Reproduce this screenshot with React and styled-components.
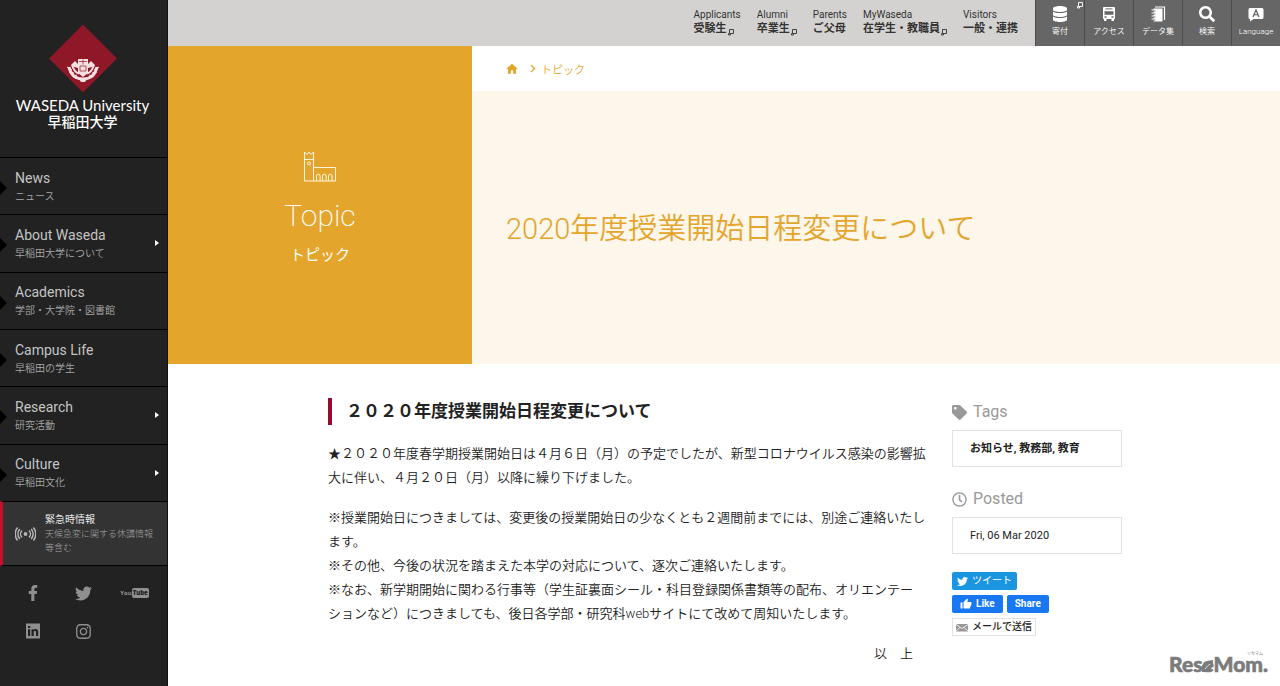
import React from "react";
import styled, { createGlobalStyle } from "styled-components";
import {
  FaDatabase,
  FaFacebookF,
  FaInstagram,
  FaRegClock,
  FaSearch,
  FaTag,
  FaTwitter,
} from "react-icons/fa";
import { MdHome, MdThumbUp } from "react-icons/md";

const GlobalStyle = createGlobalStyle`
  * {
    box-sizing: border-box;
  }

  body {
    margin: 0;
    background: #ffffff;
    color: #222222;
    font-family: Roboto, "Noto Sans CJK JP", sans-serif;
    font-size: 13px;
  }

  a {
    color: inherit;
    text-decoration: none;
  }

  button {
    border: 0;
    padding: 0;
    font-family: inherit;
    cursor: pointer;
  }

  h1, h2, h3, p, ul {
    margin: 0;
    padding: 0;
  }

  ul {
    list-style: none;
  }

  svg {
    display: block;
    flex-shrink: 0;
  }
`;

const Page = styled("div")`
  position: relative;
  display: flex;
  min-height: 100vh;
`;

const Sidebar = styled("aside")`
  width: 168px;
  flex-shrink: 0;
  background: #222222;
  border-right: 1px solid #111111;
`;

const Logo = styled("a")`
  display: flex;
  flex-direction: column;
  align-items: center;
  height: 157px;
  padding: 24px 2px 0 0;
  color: #ffffff;
`;

const LogoName = styled("span")`
  font-family: Lato, sans-serif;
  font-size: 15px;
  line-height: 20px;
  margin-top: 2px;
  white-space: nowrap;
`;

const LogoNameJa = styled("span")`
  font-size: 14px;
  font-weight: 500;
  line-height: 14px;
`;

const Menu = styled("ul")`
  display: flex;
  flex-direction: column;
  height: 344px;
`;

const MenuItem = styled("li")`
  flex: 1;
  border-top: 1px solid #000000;
`;

const MenuLink = styled("a")`
  display: flex;
  align-items: center;
  height: 100%;
  padding-right: 8px;
  color: #c4c4c4;

  div {
    flex: 1;
    padding-left: 8px;
  }
`;

const Notch = styled("span")`
  border-left: 7px solid #000000;
  border-top: 7px solid transparent;
  border-bottom: 7px solid transparent;
  margin-top: 4px;
`;

const Caret = styled("span")`
  border-left: 4px solid #ffffff;
  border-top: 3px solid transparent;
  border-bottom: 3px solid transparent;
`;

const MenuTitle = styled("span")`
  display: block;
  font-size: 14px;
  line-height: 20px;
`;

const MenuSub = styled("span")`
  display: block;
  font-size: 10px;
  font-weight: 350;
  line-height: 17px;
  color: #a8a8a8;
`;

const Emergency = styled("a")`
  display: flex;
  align-items: center;
  gap: 9px;
  height: 65px;
  padding-left: 12px;
  background: #333333;
  border-top: 1px solid #000000;
  border-bottom: 1px solid #000000;
  border-left: 3px solid #c8102e;
  color: #e8e8e8;

  span {
    display: block;
    font-size: 10px;
    line-height: 14px;
  }

  span + span {
    font-size: 9px;
    font-weight: 300;
    color: #a0a0a0;
  }
`;

const Social = styled("div")`
  display: grid;
  grid-template-columns: repeat(3, 51px);
  grid-auto-rows: 38px;
  justify-items: center;
  align-items: center;
  padding: 8px 7px;
  color: #8f8f8f;
`;

const YouTubeMark = styled("span")`
  display: flex;
  align-items: center;
  font-family: "Open Sans", sans-serif;
  font-size: 6px;
  font-weight: 700;
  line-height: 10px;

  b {
    padding: 0 1px;
    border-radius: 2px;
    background: #8f8f8f;
    color: #222222;
  }
`;

const Main = styled("main")`
  flex: 1;
  min-width: 0;
`;

const TopBar = styled("header")`
  display: flex;
  justify-content: flex-end;
  height: 46px;
  background: #d3d2d0;
`;

const Audience = styled("nav")`
  display: flex;
  gap: 16px;
  padding: 8px 17px 0 0;
`;

const AudienceLink = styled("a")`
  color: #333333;
  font-size: 10px;
  line-height: 13px;
  white-space: nowrap;

  strong {
    display: flex;
    align-items: flex-end;
    gap: 1px;
    font-size: 11px;
    line-height: 15px;
  }
`;

const Tools = styled("div")`
  display: grid;
  grid-template-columns: repeat(5, 49px);
`;

const Tool = styled("button")`
  position: relative;
  display: flex;
  flex-direction: column;
  align-items: center;
  gap: 3px;
  padding-top: 6px;
  background: #666666;
  border-left: 1px solid #4c4c4c;
  color: #ffffff;
  font-size: 8px;
  font-weight: 350;
  line-height: 14px;
`;

const ToolBadge = styled("span")`
  position: absolute;
  top: 2px;
  right: 1px;
`;

const Hero = styled("section")`
  display: grid;
  grid-template-columns: 38fr 101fr;
  min-height: 318px;
`;

const Category = styled("div")`
  display: flex;
  flex-direction: column;
  align-items: center;
  padding-top: 105px;
  background: #e4a52d;
  color: #ffffff;
`;

const CategoryName = styled("span")`
  font-size: 30px;
  font-weight: 200;
  line-height: 36px;
  margin-top: 16px;
`;

const CategorySub = styled("span")`
  font-size: 15px;
  line-height: 22px;
  margin-top: 10px;
`;

const HeroBody = styled("div")`
  display: flex;
  flex-direction: column;
`;

const Breadcrumb = styled("nav")`
  display: flex;
  align-items: center;
  gap: 11px;
  height: 45px;
  padding-left: 33px;
  color: #e4a52d;
  font-size: 11px;
  font-weight: 350;

  a {
    display: flex;
    align-items: center;
    gap: 5px;
  }
`;

const HeroTitle = styled("h1")`
  display: flex;
  align-items: center;
  flex: 1;
  padding: 2px 0 0 34px;
  background: #fdf6ea;
  color: #e4a52d;
  font-size: 29px;
  font-weight: 350;
  line-height: 40px;
`;

const Content = styled("div")`
  display: grid;
  grid-template-columns: minmax(0, 1fr) 170px;
  gap: 24px;
  max-width: 796px;
  margin: 0 auto;
  padding: 34px 0 0 2px;
`;

const ArticleTitle = styled("h2")`
  margin-bottom: 17px;
  padding-left: 14px;
  border-left: 4px solid #8e0f31;
  font-size: 17px;
  font-weight: 700;
  line-height: 27px;
`;

const Paragraph = styled("p")`
  margin-bottom: 16px;
  font-size: 13px;
  font-weight: 350;
  line-height: 24px;
  line-break: strict;
  text-align: ${({ $end }) => ($end ? "right" : "left")};
  padding-right: ${({ $end }) => ($end ? "15px" : "0")};
`;

const SideHeading = styled("h3")`
  display: flex;
  align-items: center;
  gap: 6px;
  color: #999999;
  font-size: 16px;
  font-weight: 400;
  line-height: 28px;
`;

const SideBox = styled("div")`
  height: 37px;
  margin: 4px 0 18px;
  padding-left: 17px;
  border: 1px solid #e2e2e2;
  font-size: 11px;
  font-weight: ${({ $bold }) => ($bold ? 700 : 400)};
  line-height: 36px;
`;

const ShareRow = styled("div")`
  display: flex;
  gap: 4px;
  margin-bottom: 5px;
`;

const ShareButton = styled("button")`
  display: flex;
  align-items: center;
  gap: 4px;
  height: 18px;
  padding: 0 ${({ $bold }) => ($bold ? "8px" : "5px")};
  border-radius: 2px;
  background: ${({ $color }) => $color};
  color: #ffffff;
  font-size: 10px;
  font-weight: ${({ $bold }) => ($bold ? 700 : 400)};
  line-height: 18px;
`;

const MailButton = styled(ShareButton)`
  padding: 0 3px;
  border: 1px solid #e2e2e2;
  border-radius: 0;
  color: #222222;
  font-weight: 500;
  line-height: 16px;
`;

const Watermark = styled("div")`
  position: absolute;
  right: 11px;
  bottom: 9px;
`;

const menu = [
  { title: "News", sub: "ニュース" },
  { title: "About Waseda", sub: "早稲田大学について", more: true },
  { title: "Academics", sub: "学部・大学院・図書館" },
  { title: "Campus Life", sub: "早稲田の学生" },
  { title: "Research", sub: "研究活動", more: true },
  { title: "Culture", sub: "早稲田文化", more: true },
];

const audiences = [
  { en: "Applicants", ja: "受験生", external: true },
  { en: "Alumni", ja: "卒業生", external: true },
  { en: "Parents", ja: "ご父母" },
  { en: "MyWaseda", ja: "在学生・教職員", external: true },
  { en: "Visitors", ja: "一般・連携" },
];

const tools = [
  { label: "寄付", icon: <FaDatabase size={16} />, external: true },
  { label: "アクセス", icon: <BusIcon /> },
  { label: "データ集", icon: <NotebookIcon /> },
  { label: "検索", icon: <FaSearch size={16} /> },
  { label: "Language", icon: <LanguageIcon /> },
];

function ExternalIcon() {
  return (
    <svg width="6" height="7" viewBox="0 0 6 7" fill="none" stroke="currentColor">
      <path d="M1.500 0.500h4v4h-4zM1.500 4.500h-1v1.500h2v-1.500" strokeWidth=".9" />
    </svg>
  );
}

function BusIcon() {
  return (
    <svg width="14" height="16" viewBox="0 0 14 16">
      <path
        d="M2 1h10a1 1 0 0 1 1 1v11h-1v2h-2.500v-2h-5v2H2v-2H1V2a1 1 0 0 1 1-1z"
        fill="#fff"
      />
      <path d="M2.500 5.200h9v3.600h-9zM2.500 10.300h2v1.400h-2zM9.500 10.300h2v1.400h-2z" fill="#666" />
      <path d="M3.500 2.900h7" stroke="#666" />
    </svg>
  );
}

function NotebookIcon() {
  return (
    <svg width="16" height="16" viewBox="0 0 16 16" fill="none" stroke="#fff">
      <path d="M3.500 2.500h9v13h-9z" fill="#fff" stroke="none" />
      <path d="M5 1h9.500V14" strokeWidth="1.200" />
      <path d="M5.500 5H2.500M5.500 8H2.500M5.500 11H2.500M5.500 14H2.500" stroke="#666" strokeWidth=".9" />
      <path d="M3.500 4H1.500M3.500 7H1.500M3.500 10H1.500M3.500 13H1.500" strokeWidth="1.200" />
    </svg>
  );
}

function LanguageIcon() {
  return (
    <svg width="16" height="16" viewBox="0 0 16 16">
      <path
        d="M2 2h12a1.500 1.500 0 0 1 1.500 1.500v8A1.500 1.500 0 0 1 14 13H5.500L2 15.500V13A1.500 1.500 0 0 1 .5 11.500v-8A1.500 1.500 0 0 1 2 2z"
        fill="#fff"
      />
      <path d="M5 11l3-7 3 7M6.200 8.700h3.600" fill="none" stroke="#555" strokeWidth="1.100" />
    </svg>
  );
}

function Emblem() {
  return (
    <svg width="70" height="69" viewBox="0 0 70 69">
      <path d="M35 0.500L69 34.500L35 68.500L1 34.500z" fill="#8e1728" />
      <g fill="none" stroke="#f6dfe0">
        <path d="M21 43c2 9 7 12 14 12s12-3 14-12" strokeWidth="3" />
        <path d="M24 41c2 6 4 8 7 8.500M46 41c-2 6-4 8-7 8.500" strokeWidth="2" />
        <path d="M19 43l5 3M21 48l5 1M25 52l4-1M51 43l-5 3M49 48l-5 1M45 52l-4-1" />
      </g>
      <path d="M30 35h10v14l-5 4-5-4z" fill="#f6dfe0" />
      <path d="M31 37.500h8M35 35.500v5M32 42h6v5h-6z" stroke="#8e1728" strokeWidth=".7" fill="none" />
      <path d="M23 41l4-4 3 3v4l-4-1zM47 41l-4-4-3 3v4l4-1zM31 55l2 3h4l2-3z" fill="#f6dfe0" />
    </svg>
  );
}

function SignalIcon() {
  return (
    <svg width="21" height="16" viewBox="0 0 21 16" fill="none" stroke="#b5b5b5" strokeWidth="1.500">
      <circle cx="10.500" cy="8" r="1.900" fill="#b5b5b5" stroke="none" />
      <path d="M7 4.500a5 5 0 0 0 0 7M4.800 3a7.500 7.500 0 0 0 0 10M2.600 1.500a10 10 0 0 0 0 13" />
      <path d="M14 4.500a5 5 0 0 1 0 7M16.200 3a7.500 7.500 0 0 1 0 10M18.400 1.500a10 10 0 0 1 0 13" />
    </svg>
  );
}

function LinkedInIcon() {
  return (
    <svg width="16" height="16" viewBox="0 0 16 16">
      <path d="M1 0.500h14v15H1z" fill="#8f8f8f" />
      <path
        d="M3 6.200h2.200V13H3zM3 3h2.200v2H3zM6.500 6.200h2v1c1-1.600 4.700-1.700 4.700 1.600V13H11V9.500c0-2-2.300-1.900-2.300 0V13H6.500z"
        fill="#222"
      />
    </svg>
  );
}

function CampusIcon() {
  return (
    <svg width="34" height="31" viewBox="0 0 34 31" fill="none" stroke="#fff5dc">
      <path d="M1.500 30V1l2.500 2.500L6 1l2 2.500L10.500 1v29M1.500 8.500h9M1.500 5.500V30h31V16.500h-22" />
      <circle cx="6" cy="12.500" r="1.500" />
      <path d="M13.500 30v-5a1.800 1.800 0 0 1 3.600 0v5M19.500 30v-5a1.800 1.800 0 0 1 3.600 0v5M25.500 30v-5a1.800 1.800 0 0 1 3.600 0v5" />
    </svg>
  );
}

function ChevronIcon() {
  return (
    <svg width="6" height="9" viewBox="0 0 6 9" fill="none" stroke="currentColor" strokeWidth="1.300">
      <path d="M1 1l3.500 3.500L1 8" />
    </svg>
  );
}

function MailIcon() {
  return (
    <svg width="12" height="9" viewBox="0 0 12 9">
      <path d="M0 1h12v7.500H0z" fill="#999" />
      <path d="M0 1.500l6 4 6-4M0 8l4-3.500M12 8L8 4.500" fill="none" stroke="#fff" strokeWidth=".8" />
    </svg>
  );
}

function ReseMomLogo() {
  return (
    <svg width="100" height="26" viewBox="0 0 100 26" fill="#7b7b7b">
      <text x="0" y="21" fontFamily="Lato" fontSize="21" fontWeight="900" stroke="#7b7b7b" strokeWidth=".6">
        ReseMom.
      </text>
      <path d="M33 21c-2-7 2-11 11-12 0 8-3 13-9 12z" />
      <path d="M36 18c1-2 3-3 5-5" stroke="#fff" strokeWidth=".8" fill="none" />
      <text x="78" y="4" fontFamily="Noto Sans CJK JP" fontSize="4">
        リセマム
      </text>
    </svg>
  );
}

function SideNav() {
  return (
    <Sidebar>
      <Logo href="#">
        <Emblem />
        <LogoName>WASEDA University</LogoName>
        <LogoNameJa>早稲田大学</LogoNameJa>
      </Logo>
      <Menu>
        {menu.map((item) => (
          <MenuItem key={item.title}>
            <MenuLink href="#">
              <Notch />
              <div>
                <MenuTitle>{item.title}</MenuTitle>
                <MenuSub>{item.sub}</MenuSub>
              </div>
              {item.more && <Caret />}
            </MenuLink>
          </MenuItem>
        ))}
      </Menu>
      <Emergency href="#">
        <SignalIcon />
        <div>
          <span>緊急時情報</span>
          <span>
            天候急変に関する休講情報
            <br />
            等含む
          </span>
        </div>
      </Emergency>
      <Social>
        <a href="#" aria-label="Facebook">
          <FaFacebookF size={16} />
        </a>
        <a href="#" aria-label="Twitter">
          <FaTwitter size={17} />
        </a>
        <a href="#">
          <YouTubeMark>
            You<b>Tube</b>
          </YouTubeMark>
        </a>
        <a href="#" aria-label="LinkedIn">
          <LinkedInIcon />
        </a>
        <a href="#" aria-label="Instagram">
          <FaInstagram size={17} />
        </a>
      </Social>
    </Sidebar>
  );
}

function App() {
  return (
    <Page lang="ja">
      <GlobalStyle />
      <SideNav />
      <Main>
        <TopBar>
          <Audience>
            {audiences.map((item) => (
              <AudienceLink href="#" key={item.en}>
                {item.en}
                <strong>
                  {item.ja}
                  {item.external && <ExternalIcon />}
                </strong>
              </AudienceLink>
            ))}
          </Audience>
          <Tools>
            {tools.map((tool) => (
              <Tool type="button" key={tool.label}>
                {tool.icon}
                {tool.label}
                {tool.external && (
                  <ToolBadge>
                    <ExternalIcon />
                  </ToolBadge>
                )}
              </Tool>
            ))}
          </Tools>
        </TopBar>
        <Hero>
          <Category>
            <CampusIcon />
            <CategoryName>Topic</CategoryName>
            <CategorySub>トピック</CategorySub>
          </Category>
          <HeroBody>
            <Breadcrumb>
              <a href="#" aria-label="Home">
                <MdHome size={14} />
              </a>
              <a href="#">
                <ChevronIcon />
                トピック
              </a>
            </Breadcrumb>
            <HeroTitle>2020年度授業開始日程変更について</HeroTitle>
          </HeroBody>
        </Hero>
        <Content>
          <article>
            <ArticleTitle>２０２０年度授業開始日程変更について</ArticleTitle>
            <Paragraph>
              ★２０２０年度春学期授業開始日は４月６日（月）の予定でしたが、新型コロナウイルス感染の影響拡大に伴い、４月２０日（月）以降に繰り下げました。
            </Paragraph>
            <Paragraph>
              ※授業開始日につきましては、変更後の授業開始日の少なくとも２週間前までには、別途ご連絡いたします。
              <br />
              ※その他、今後の状況を踏まえた本学の対応について、逐次ご連絡いたします。
              <br />
              ※なお、新学期開始に関わる行事等（学生証裏面シール・科目登録関係書類等の配布、オリエンテーションなど）につきましても、後日各学部・研究科webサイトにて改めて周知いたします。
            </Paragraph>
            <Paragraph $end>以　上</Paragraph>
          </article>
          <aside>
            <SideHeading>
              <FaTag size={15} />
              Tags
            </SideHeading>
            <SideBox $bold>
              <a href="#">お知らせ</a>, <a href="#">教務部</a>, <a href="#">教育</a>
            </SideBox>
            <SideHeading>
              <FaRegClock size={15} />
              Posted
            </SideHeading>
            <SideBox>Fri, 06 Mar 2020</SideBox>
            <ShareRow>
              <ShareButton type="button" $color="#1b95e0">
                <FaTwitter size={11} />
                ツイート
              </ShareButton>
            </ShareRow>
            <ShareRow>
              <ShareButton type="button" $color="#1877f2" $bold>
                <MdThumbUp size={12} />
                Like
              </ShareButton>
              <ShareButton type="button" $color="#1877f2" $bold>
                Share
              </ShareButton>
            </ShareRow>
            <ShareRow>
              <MailButton type="button" $color="#ffffff">
                <MailIcon />
                メールで送信
              </MailButton>
            </ShareRow>
          </aside>
        </Content>
      </Main>
      <Watermark>
        <ReseMomLogo />
      </Watermark>
    </Page>
  );
}

export default App;
